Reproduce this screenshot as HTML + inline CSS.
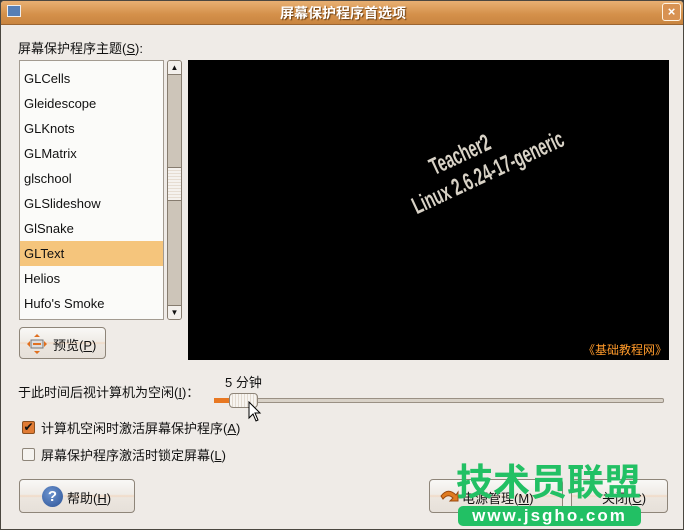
<!DOCTYPE html>
<html><head><meta charset="utf-8">
<style>
*{box-sizing:border-box;margin:0;padding:0}
body{width:684px;height:530px;overflow:hidden;background:#3c3b37;font-family:"Liberation Sans","Noto Sans CJK SC",sans-serif;font-size:13px;color:#111}
.win{position:absolute;left:0;top:0;width:684px;height:530px;background:#efebe7;border:1px solid #4a4740;border-radius:4px 4px 0 0;overflow:hidden}
.title{position:absolute;left:-1px;top:-1px;width:686px;height:25px;background:linear-gradient(#e9b276,#d4904a 60%,#c98540);border-bottom:1px solid #9c6531}
.title .t{position:absolute;left:0;right:0;top:3px;text-align:center;color:#fff;font-weight:bold;font-size:14px;text-shadow:1px 1px 1px #6a3e12}
.close{position:absolute;right:5px;top:3px;width:19px;height:18px;border:1px solid #fff3e2;border-radius:3px;background:#d89252;color:#fff;font-weight:bold;font-size:13px;line-height:15px;text-align:center}
.ico{position:absolute;left:7px;top:5px;width:14px;height:12px;background:#567fb6;border:1px solid #eee}
.abs{position:absolute;white-space:nowrap}
.list{position:absolute;left:18px;top:59px;width:145px;height:260px;background:#fbfbf9;border:1px solid #a39b91}
.row{position:absolute;left:0;width:143px;height:25px;line-height:25px;padding-left:4px;font-size:13px}
.sel{background:#f5c57c}
.sb{position:absolute;left:166px;top:59px;width:15px;height:260px;background:#cdc5b9;border:1px solid #867c6f;border-radius:3px}
.prev{position:absolute;left:187px;top:59px;width:481px;height:300px;background:#000;overflow:hidden}
.btn{position:absolute;border:1px solid #8e8579;border-radius:4px;background:linear-gradient(#f9f8f6,#efebe6 45%,#f1d9c4 50%,#ece6df 55%,#e6e0d9)}
</style></head><body>
<div class="win">
 <div class="title"><div class="ico"></div><div class="t">屏幕保护程序首选项</div><div class="close">×</div></div>
 <div class="abs" style="left:17px;top:37px">屏幕保护程序主题(<u>S</u>):</div>
 <div class="list">
  <div class="row" style="top:5px">GLCells</div>
  <div class="row" style="top:30px">Gleidescope</div>
  <div class="row" style="top:55px">GLKnots</div>
  <div class="row" style="top:80px">GLMatrix</div>
  <div class="row" style="top:105px">glschool</div>
  <div class="row" style="top:130px">GLSlideshow</div>
  <div class="row" style="top:155px">GlSnake</div>
  <div class="row sel" style="top:180px">GLText</div>
  <div class="row" style="top:205px">Helios</div>
  <div class="row" style="top:230px">Hufo's Smoke</div>
 </div>
 <div class="sb">
  <div style="position:absolute;left:0;top:0;width:13px;height:14px;background:#f3f0ec;border-bottom:1px solid #867c6f;border-radius:2px 2px 0 0;font-size:8px;text-align:center;line-height:14px">▲</div>
  <div style="position:absolute;left:0;top:106px;width:13px;height:34px;background:repeating-linear-gradient(#f5f2ee 0 2px,#e6ddd2 2px 3px);border-top:1px solid #867c6f;border-bottom:1px solid #867c6f"></div>
  <div style="position:absolute;left:0;bottom:0;width:13px;height:14px;background:#f3f0ec;border-top:1px solid #867c6f;border-radius:0 0 2px 2px;font-size:8px;text-align:center;line-height:14px">▼</div>
 </div>
 <div class="prev">
  <div class="abs" style="left:208px;top:110px;color:#d8d2c6;font-size:24px;font-weight:bold;transform:rotate(-25deg) scaleX(0.62);transform-origin:left top">
   <div class="abs" style="left:52px;top:0">Teacher2</div>
   <div class="abs" style="left:0;top:28px">Linux 2.6.24-17-generic</div>
  </div>
  <div class="abs" style="right:2px;bottom:2px;color:#ff9a2a;font-size:12px">《基础教程网》</div>
 </div>
 <div class="btn" style="left:18px;top:326px;width:87px;height:32px">
  <svg style="position:absolute;left:7px;top:6px" width="20" height="20"><rect x="4" y="6" width="12" height="8" fill="#ddd" stroke="#777"/><line x1="6" y1="10" x2="14" y2="10" stroke="#e07020" stroke-width="2"/><path d="M10 0L13 3H7zM10 20L13 17H7zM0 10L3 7V13zM20 10L17 7V13z" fill="#e07020"/></svg>
  <div class="abs" style="left:33px;top:7px">预览(<u>P</u>)</div>
 </div>
 <div class="abs" style="left:17px;top:381px">于此时间后视计算机为空闲(<u>I</u>)：</div>
 <div class="abs" style="left:224px;top:371px">5 分钟</div>
 <div style="position:absolute;left:213px;top:397px;width:450px;height:5px;background:#d9d2c8;border:1px solid #9a9084;border-radius:2px"></div>
 <div style="position:absolute;left:213px;top:397px;width:18px;height:5px;background:#e87822"></div>
 <div style="position:absolute;left:228px;top:392px;width:29px;height:15px;border:1px solid #8e8579;border-radius:4px;background:repeating-linear-gradient(90deg,#f7f4f0 0 2px,#e2dad0 2px 3px)"></div>
 <svg style="position:absolute;left:247px;top:400px" width="14" height="22"><path d="M1 1V17L5 13L8 20L10 19L7 12H12Z" fill="#fff" stroke="#000"/></svg>
 <div style="position:absolute;left:21px;top:420px;width:13px;height:13px;background:#e07b34;border:1px solid #8a4f1f;border-radius:2px;color:#111;font-size:12px;line-height:11px;text-align:center">✔</div>
 <div class="abs" style="left:40px;top:417px">计算机空闲时激活屏幕保护程序(<u>A</u>)</div>
 <div style="position:absolute;left:21px;top:447px;width:13px;height:13px;background:#f5f3f0;border:1px solid #8e8579;border-radius:2px"></div>
 <div class="abs" style="left:40px;top:444px">屏幕保护程序激活时锁定屏幕(<u>L</u>)</div>
 <div class="btn" style="left:18px;top:478px;width:116px;height:34px">
  <div style="position:absolute;left:22px;top:6px;width:21px;height:21px;border-radius:50%;background:radial-gradient(circle at 40% 35%,#6d94cf,#2c5396);color:#fff;font-weight:bold;text-align:center;line-height:21px;font-size:15px">?</div>
  <div class="abs" style="left:47px;top:8px">帮助(<u>H</u>)</div>
 </div>
 <div class="btn" style="left:428px;top:478px;width:134px;height:34px">
  <svg style="position:absolute;left:8px;top:8px" width="22" height="20"><path d="M3 8Q10 -1 18 7L20 4V13H12L15 10Q10 5 5 11Z" fill="#e07b20" stroke="#9a4a10"/></svg>
  <div class="abs" style="left:32px;top:8px">电源管理(<u>M</u>)</div>
 </div>
 <div class="btn" style="left:570px;top:478px;width:97px;height:34px">
  <div class="abs" style="left:30px;top:8px">关闭(<u>C</u>)</div>
 </div>
 <div class="abs" style="left:455px;top:460px;color:#22c064;font-size:37px;font-weight:bold;letter-spacing:0;line-height:44px">技术员联盟</div>
 <div style="position:absolute;left:457px;top:505px;width:183px;height:20px;background:#22c064;border-radius:5px;color:#fff;font-weight:bold;font-size:17px;text-align:center;line-height:20px;letter-spacing:2px">www.jsgho.com</div>
</div>
</body></html>
